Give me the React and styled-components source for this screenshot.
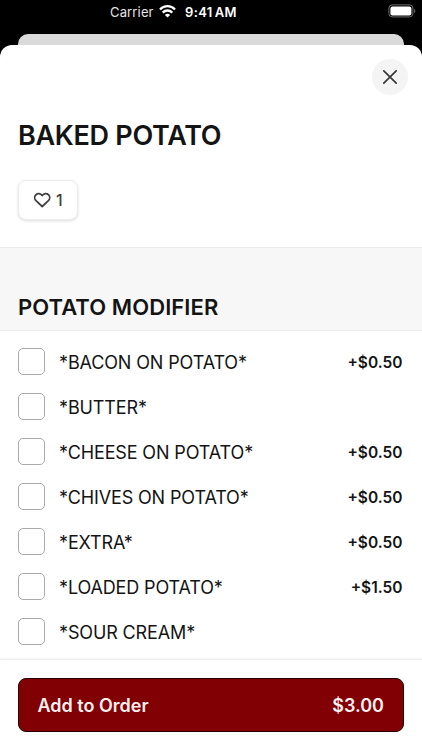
import React from "react";
import styled, { createGlobalStyle } from "styled-components";

const GlobalStyle = createGlobalStyle`
  *, *::before, *::after { box-sizing: border-box; }
  body { margin: 0; background: #000; font-family: Inter, "Liberation Sans", sans-serif; color: #141414; }
  button, h1, h2 { font: inherit; margin: 0; }
`;

const Screen = styled.div`
  width: 422px;
  height: 750px;
  display: flex;
  flex-direction: column;
  overflow: hidden;
  background: #000;
`;

const StatusBar = styled.header`
  flex: none;
  height: 34px;
  padding: 0 6px 0 110px;
  display: flex;
  align-items: flex-start;
  color: #fff;
  line-height: 24px;
`;

const Carrier = styled.span`
  width: 48.5px;
  font-size: 13px;
  letter-spacing: 0.15px;
  color: #e4e4e4;
  white-space: nowrap;
`;

const WifiIcon = styled.svg`
  width: 17px;
  height: 13px;
  margin-top: 5px;
`;

const Clock = styled.span`
  margin-left: 9.5px;
  font-size: 13px;
  font-weight: 600;
  letter-spacing: 0.35px;
  word-spacing: -1.5px;
  white-space: nowrap;
`;

const BatteryIcon = styled.svg`
  width: 28px;
  height: 14px;
  margin: 4px 0 0 auto;
`;

const BackSheet = styled.div`
  flex: none;
  height: 11px;
  margin: 0 18px;
  border-radius: 10px 10px 0 0;
  background: #dadada;
`;

const Sheet = styled.main`
  flex: 1;
  min-height: 0;
  display: flex;
  flex-direction: column;
  border-radius: 12px 12px 0 0;
  background: #fff;
  overflow: hidden;
`;

const ItemHeader = styled.section`
  flex: none;
  height: 202px;
  padding: 13.5px 14px 0 18px;
  display: flex;
  flex-direction: column;
  align-items: flex-start;
`;

const CloseButton = styled.button`
  align-self: flex-end;
  width: 36px;
  height: 36px;
  padding: 0;
  border: 0;
  border-radius: 50%;
  display: grid;
  place-items: center;
  background: #f4f4f4;
`;

const Title = styled.h1`
  margin-top: 24.5px;
  font-size: 27px;
  line-height: 34px;
  font-weight: 600;
  letter-spacing: -0.3px;
  white-space: nowrap;
`;

const LikeButton = styled.button`
  width: 60px;
  height: 40px;
  margin-top: 27px;
  padding: 0 0 0 15px;
  display: flex;
  align-items: center;
  gap: 5px;
  border: 1px solid #ececec;
  border-radius: 8px;
  background: #fff;
  box-shadow: 0 1px 3px rgba(0, 0, 0, 0.14);
  color: #404040;
  font-size: 16px;
  font-weight: 500;
`;

const SectionHeader = styled.section`
  flex: none;
  height: 84px;
  padding: 43px 18px 0;
  border-top: 1px solid #ececec;
  border-bottom: 1px solid #ececec;
  background: #f7f7f7;
`;

const SectionTitle = styled.h2`
  font-size: 22px;
  line-height: 32px;
  font-weight: 600;
  letter-spacing: 0.07px;
  white-space: nowrap;
`;

const Options = styled.div`
  flex: 1;
  min-height: 0;
  padding-top: 8.5px;
  overflow: hidden;
`;

const Option = styled.label`
  height: 45px;
  padding: 0 19.5px 0 18px;
  display: flex;
  align-items: center;
`;

const Checkbox = styled.input.attrs({ type: "checkbox" })`
  appearance: none;
  flex: none;
  width: 27px;
  height: 27px;
  margin: 0 14px 1px 0;
  border: 1px solid #aaa;
  border-radius: 5px;
  background: #fff;
`;

const OptionName = styled.span`
  flex: 1;
  font-size: 18px;
  letter-spacing: -0.13px;
  white-space: nowrap;
`;

const OptionPrice = styled.span`
  font-size: 15.5px;
  font-weight: 600;
  white-space: nowrap;
`;

const Footer = styled.footer`
  flex: none;
  height: 91px;
  padding: 18px 18px 0;
  border-top: 1px solid #efefef;
  box-shadow: 0 -1px 2px rgba(0, 0, 0, 0.05);
`;

const OrderButton = styled.button`
  width: 100%;
  height: 54px;
  padding: 0 19px 0 18.5px;
  display: flex;
  align-items: center;
  justify-content: space-between;
  border: 1px solid #260003;
  border-radius: 8px;
  background: #800003;
  color: #f9efef;
  font-size: 18px;
  font-weight: 600;
  white-space: nowrap;
`;

const options = [
  { name: "*BACON ON POTATO*", price: "+$0.50" },
  { name: "*BUTTER*" },
  { name: "*CHEESE ON POTATO*", price: "+$0.50" },
  { name: "*CHIVES ON POTATO*", price: "+$0.50" },
  { name: "*EXTRA*", price: "+$0.50" },
  { name: "*LOADED POTATO*", price: "+$1.50" },
  { name: "*SOUR CREAM*" },
];

export default function App() {
  return (
    <>
      <GlobalStyle />
      <Screen>
        <StatusBar>
          <Carrier>Carrier</Carrier>
          <WifiIcon viewBox="0 0 17 13" fill="none" stroke="#fff" strokeWidth="2.3">
            <path d="M1 4.5C5.1.1 11.9.1 16 4.5" />
            <path d="M3.7 7.6c2.7-2.8 6.9-2.8 9.6 0" />
            <path d="M5.9 9.9c1.5-1.4 3.7-1.4 5.2 0L8.5 12.6Z" fill="#fff" stroke="none" />
          </WifiIcon>
          <Clock>9:41 AM</Clock>
          <BatteryIcon viewBox="0 0 28 14" fill="none">
            <rect x="0.9" y="0.9" width="24" height="12" rx="3.3" stroke="#6c6c6c" />
            <rect x="2.4" y="2.4" width="21" height="9" rx="2" fill="#fff" />
            <path d="M26.2 5v4c1.5-.5 1.5-3.5 0-4Z" fill="#6c6c6c" />
          </BatteryIcon>
        </StatusBar>
        <BackSheet />
        <Sheet>
          <ItemHeader>
            <CloseButton aria-label="Close">
              <svg width="16" height="16" viewBox="0 0 16 16" stroke="#383838" strokeWidth="1.7" strokeLinecap="round">
                <path d="M1.8 1.8 14.2 14.2M14.2 1.8 1.8 14.2" />
              </svg>
            </CloseButton>
            <Title>BAKED POTATO</Title>
            <LikeButton aria-label="Like">
              <svg width="17" height="16" viewBox="0 0 17 16" fill="none" stroke="#404040" strokeWidth="1.8" strokeLinejoin="round">
                <path d="M8.2 14.5 2 8.7C.4 7.1.3 4.4 1.8 2.8 3.6 1 6.5 1.2 8.2 3.5c1.7-2.3 4.6-2.5 6.4-.7 1.5 1.6 1.4 4.3-.2 5.9Z" />
              </svg>
              <span>1</span>
            </LikeButton>
          </ItemHeader>
          <SectionHeader>
            <SectionTitle>POTATO MODIFIER</SectionTitle>
          </SectionHeader>
          <Options>
            {options.map(({ name, price }) => (
              <Option key={name}>
                <Checkbox />
                <OptionName>{name}</OptionName>
                {price && <OptionPrice>{price}</OptionPrice>}
              </Option>
            ))}
          </Options>
          <Footer>
            <OrderButton>
              <span>Add to Order</span>
              <span>$3.00</span>
            </OrderButton>
          </Footer>
        </Sheet>
      </Screen>
    </>
  );
}
